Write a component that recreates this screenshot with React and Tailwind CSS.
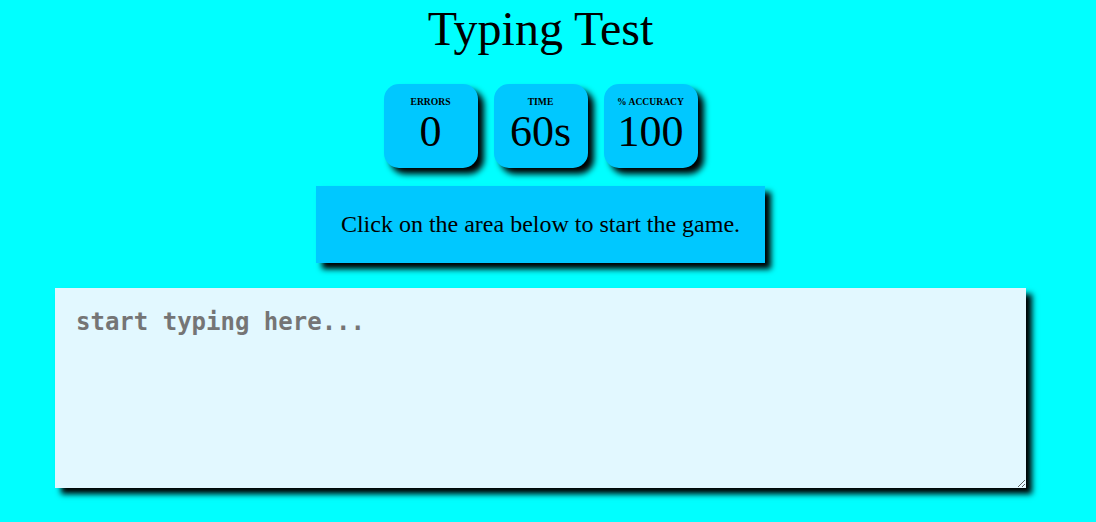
import React from 'react';

const stats = [
  { label: 'Errors', value: '0' },
  { label: 'Time', value: '60s' },
  { label: '% Accuracy', value: '100' },
];

const StatBox = ({ label, value }) => (
  <div className="flex h-[84px] w-[94px] flex-col items-center rounded-[15px] bg-[#00c8ff] pt-[13px] shadow-[6px_6px_6px_#000]">
    <span className="text-[9.6px] font-bold uppercase leading-none">{label}</span>
    <span className="mt-[1px] text-[44px] leading-[48px]">{value}</span>
  </div>
);

export default function App() {
  return (
    <div className="min-h-[522px] w-full bg-[#00ffff] font-['Liberation_Serif',serif] text-black">
      <div className="flex w-[1081px] flex-col items-center pt-[1px]">
        <h1 className="text-[48px] leading-[55px]">Typing Test</h1>

        <div className="mt-[28px] flex gap-[16px]">
          {stats.map((s) => (
            <StatBox key={s.label} label={s.label} value={s.value} />
          ))}
        </div>

        <div className="mt-[18px] bg-[#00c8ff] px-[25px] py-[24px] text-[24px] leading-[29px] shadow-[6px_6px_6px_#000]">
          Click on the area below to start the game.
        </div>

        <textarea
          className="mt-[25px] h-[200px] w-[971px] border-0 bg-[#e2f8ff] px-[21px] py-[19px] font-['DejaVu_Sans_Mono',monospace] text-[24px] font-bold leading-[30px] shadow-[6px_6px_6px_#000] outline-none placeholder:text-[#757575]"
          placeholder="start typing here..."
        />
      </div>
    </div>
  );
}
